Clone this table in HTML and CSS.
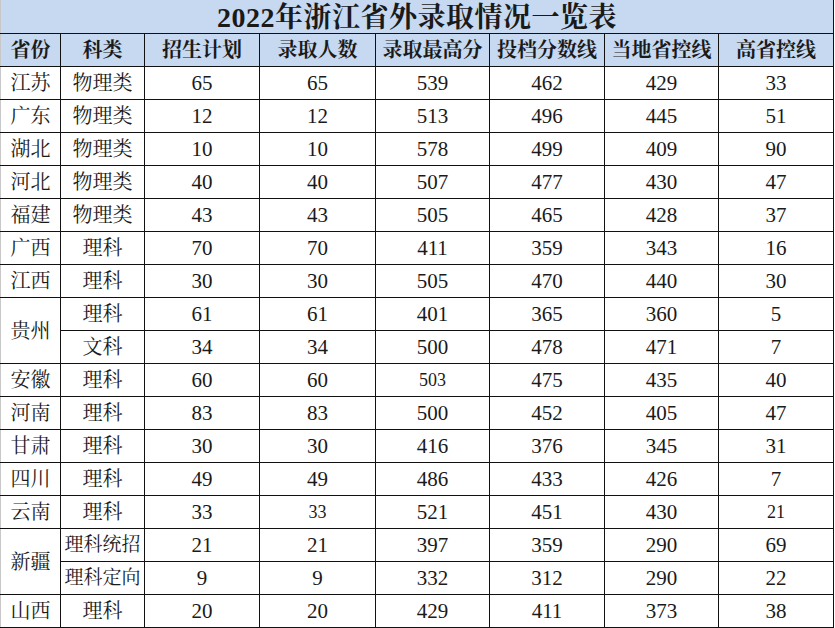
FILE: index.html
```html
<!DOCTYPE html>
<html lang="zh">
<head>
<meta charset="utf-8">
<title>2022年浙江省外录取情况一览表</title>
<link rel="stylesheet" href="styles.css">
</head>
<body>
<table class="sheet">
  <colgroup>
    <col class="c1"><col class="c2"><col class="c3"><col class="c4"><col class="c5"><col class="c6"><col class="c7"><col class="c8">
  </colgroup>
  <thead>
    <tr class="title-row"><th colspan="8" class="title">2022年浙江省外录取情况一览表</th></tr>
    <tr class="head-row">
      <th>省份</th><th>科类</th><th>招生计划</th><th>录取人数</th><th>录取最高分</th><th>投档分数线</th><th>当地省控线</th><th>高省控线</th>
    </tr>
  </thead>
  <tbody>
    <tr><td class="t">江苏</td><td class="t">物理类</td><td>65</td><td>65</td><td>539</td><td>462</td><td>429</td><td>33</td></tr>
    <tr><td class="t">广东</td><td class="t">物理类</td><td>12</td><td>12</td><td>513</td><td>496</td><td>445</td><td>51</td></tr>
    <tr><td class="t">湖北</td><td class="t">物理类</td><td>10</td><td>10</td><td>578</td><td>499</td><td>409</td><td>90</td></tr>
    <tr><td class="t">河北</td><td class="t">物理类</td><td>40</td><td>40</td><td>507</td><td>477</td><td>430</td><td>47</td></tr>
    <tr><td class="t">福建</td><td class="t">物理类</td><td>43</td><td>43</td><td>505</td><td>465</td><td>428</td><td>37</td></tr>
    <tr><td class="t">广西</td><td class="t">理科</td><td>70</td><td>70</td><td>411</td><td>359</td><td>343</td><td>16</td></tr>
    <tr><td class="t">江西</td><td class="t">理科</td><td>30</td><td>30</td><td>505</td><td>470</td><td>440</td><td>30</td></tr>
    <tr><td class="t" rowspan="2">贵州</td><td class="t">理科</td><td>61</td><td>61</td><td>401</td><td>365</td><td>360</td><td>5</td></tr>
    <tr><td class="t">文科</td><td>34</td><td>34</td><td>500</td><td>478</td><td>471</td><td>7</td></tr>
    <tr><td class="t">安徽</td><td class="t">理科</td><td>60</td><td>60</td><td class="sm">503</td><td>475</td><td>435</td><td>40</td></tr>
    <tr><td class="t">河南</td><td class="t">理科</td><td>83</td><td>83</td><td>500</td><td>452</td><td>405</td><td>47</td></tr>
    <tr><td class="t">甘肃</td><td class="t">理科</td><td>30</td><td>30</td><td>416</td><td>376</td><td>345</td><td>31</td></tr>
    <tr><td class="t">四川</td><td class="t">理科</td><td>49</td><td>49</td><td>486</td><td>433</td><td>426</td><td>7</td></tr>
    <tr><td class="t">云南</td><td class="t">理科</td><td>33</td><td class="sm">33</td><td>521</td><td>451</td><td>430</td><td class="sm">21</td></tr>
    <tr><td class="t" rowspan="2">新疆</td><td class="t tight">理科统招</td><td>21</td><td>21</td><td>397</td><td>359</td><td>290</td><td>69</td></tr>
    <tr><td class="t tight">理科定向</td><td>9</td><td>9</td><td>332</td><td>312</td><td>290</td><td>22</td></tr>
    <tr><td class="t">山西</td><td class="t">理科</td><td>20</td><td>20</td><td>429</td><td>411</td><td>373</td><td>38</td></tr>
  </tbody>
</table>
</body>
</html>
```

FILE: styles.css
```css
html, body {
  margin: 0;
  padding: 0;
  background: #ffffff;
}

.sheet {
  border-collapse: collapse;
  table-layout: fixed;
  width: 834px;
  font-family: "Liberation Serif", "Noto Serif CJK SC", "Noto Sans CJK SC", serif;
  color: #1a1a1a;
}

.c1 { width: 60px; }
.c2 { width: 84px; }
.c3 { width: 115px; }
.c4 { width: 116px; }
.c5 { width: 114px; }
.c6 { width: 115px; }
.c7 { width: 114px; }
.c8 { width: 115px; }

.sheet th,
.sheet td {
  border: 1px solid #111111;
  padding: 0;
  text-align: center;
  vertical-align: middle;
  height: 32px;
  line-height: 32px;
  white-space: nowrap;
  overflow: hidden;
}

.sheet td {
  font-size: 21px;
  font-weight: 400;
}

.sheet td.t {
  font-size: 20px;
}

.sheet tr > :first-child {
  border-left-color: #c8c8c8;
}

.title-row .title {
  background: #c6d9f1;
  border-top: none;
  border-left-color: #c8c8c8;
  font-size: 28px;
  font-weight: 700;
  letter-spacing: 0.5px;
  padding-top: 2px;
  height: 31px;
  line-height: 31px;
}

.head-row th {
  background: #c6d9f1;
  font-size: 20px;
  font-weight: 700;
}

.sheet td.sm {
  font-size: 18px;
}

.sheet td.tight {
  letter-spacing: 0;
  font-size: 19px;
}
```
